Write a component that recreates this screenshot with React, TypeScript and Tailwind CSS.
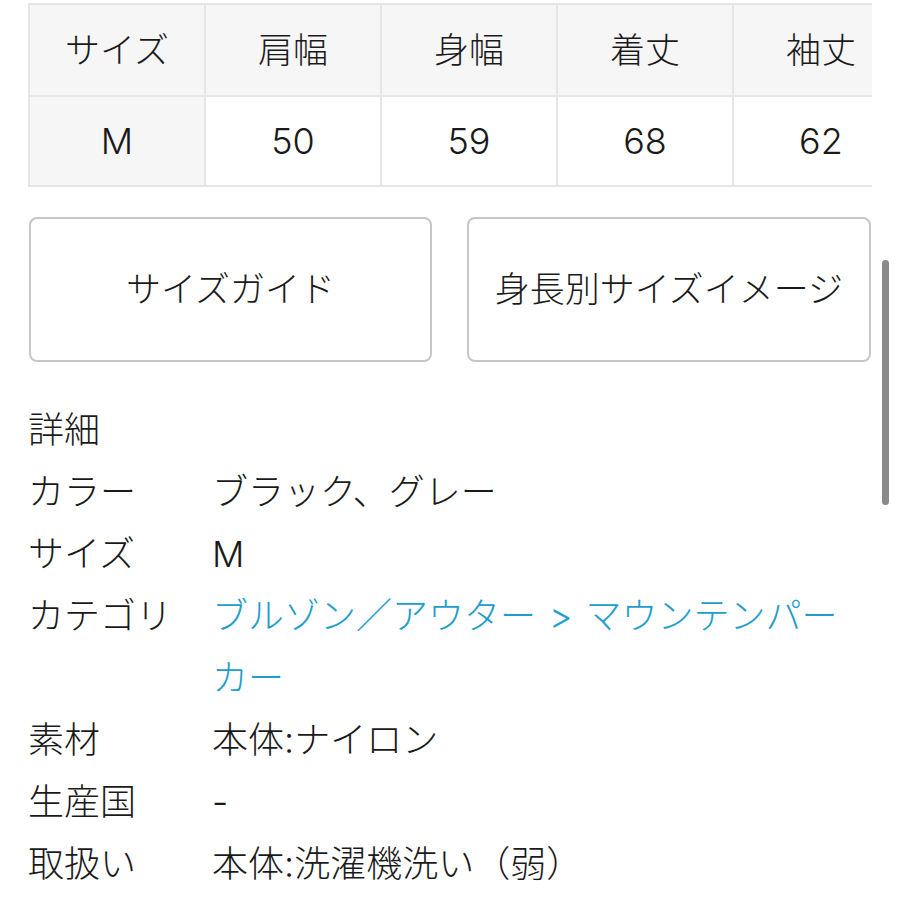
import React from "react";

const heads = ["サイズ", "肩幅", "身幅", "着丈", "袖丈"];
const values = ["M", "50", "59", "68", "62"];

const details: { label: string; value: React.ReactNode }[] = [
  { label: "カラー", value: "ブラック、グレー" },
  { label: "サイズ", value: "M" },
  {
    label: "カテゴリ",
    value: (
      <span className="text-[#1f9dcc]">
        ブルゾン／アウター<span className="mx-[13px]">&gt;</span>マウンテンパー
        <br />
        カー
      </span>
    ),
  },
  { label: "素材", value: "本体:ナイロン" },
  { label: "生産国", value: "-" },
  { label: "取扱い", value: "本体:洗濯機洗い（弱）" },
];

export default function App() {
  return (
    <div
      className="relative w-[900px] h-[900px] overflow-hidden bg-white font-light text-[#1a1a1a]"
      style={{ fontFamily: 'Inter, "Noto Sans CJK JP", sans-serif' }}
    >
      <div className="pl-[28px] pt-[3px] pr-[28px]">
        {/* Size table */}
        <div className="w-[844px] overflow-hidden">
          <div className="grid w-max grid-cols-[repeat(5,174px)] gap-[2px] bg-[#e6e6e6] p-[2px]">
            {heads.map((h) => (
              <div
                key={h}
                className="flex h-[90px] items-center justify-center bg-[#f6f6f6] text-[35px]"
              >
                {h}
              </div>
            ))}
            {values.map((v, i) => (
              <div
                key={i}
                className={
                  "flex h-[88px] items-center justify-center text-[36px] " +
                  (i === 0 ? "bg-[#f6f6f6]" : "bg-white")
                }
              >
                {v}
              </div>
            ))}
          </div>
        </div>

        {/* Buttons */}
        <div className="mt-[30px] flex gap-[35px] pl-[1px]">
          <button className="flex h-[145px] w-[403px] items-center justify-center rounded-[8px] border-2 border-[#c6c6c6] bg-white text-[35px]">
            サイズガイド
          </button>
          <button className="flex h-[145px] w-[404px] items-center justify-center rounded-[8px] border-2 border-[#c6c6c6] bg-white text-[35px]">
            身長別サイズイメージ
          </button>
        </div>

        {/* Details */}
        <div className="mt-[37px] text-[36px] leading-[62px]">
          <div>詳細</div>
          {details.map((d) => (
            <div key={d.label} className="flex">
              <div className="w-[184px] shrink-0">{d.label}</div>
              <div>{d.value}</div>
            </div>
          ))}
        </div>
      </div>

      {/* Scroll indicator */}
      <div className="absolute left-[882px] top-[260px] h-[245px] w-[7px] rounded-full bg-[#8a8a8a]" />
    </div>
  );
}
